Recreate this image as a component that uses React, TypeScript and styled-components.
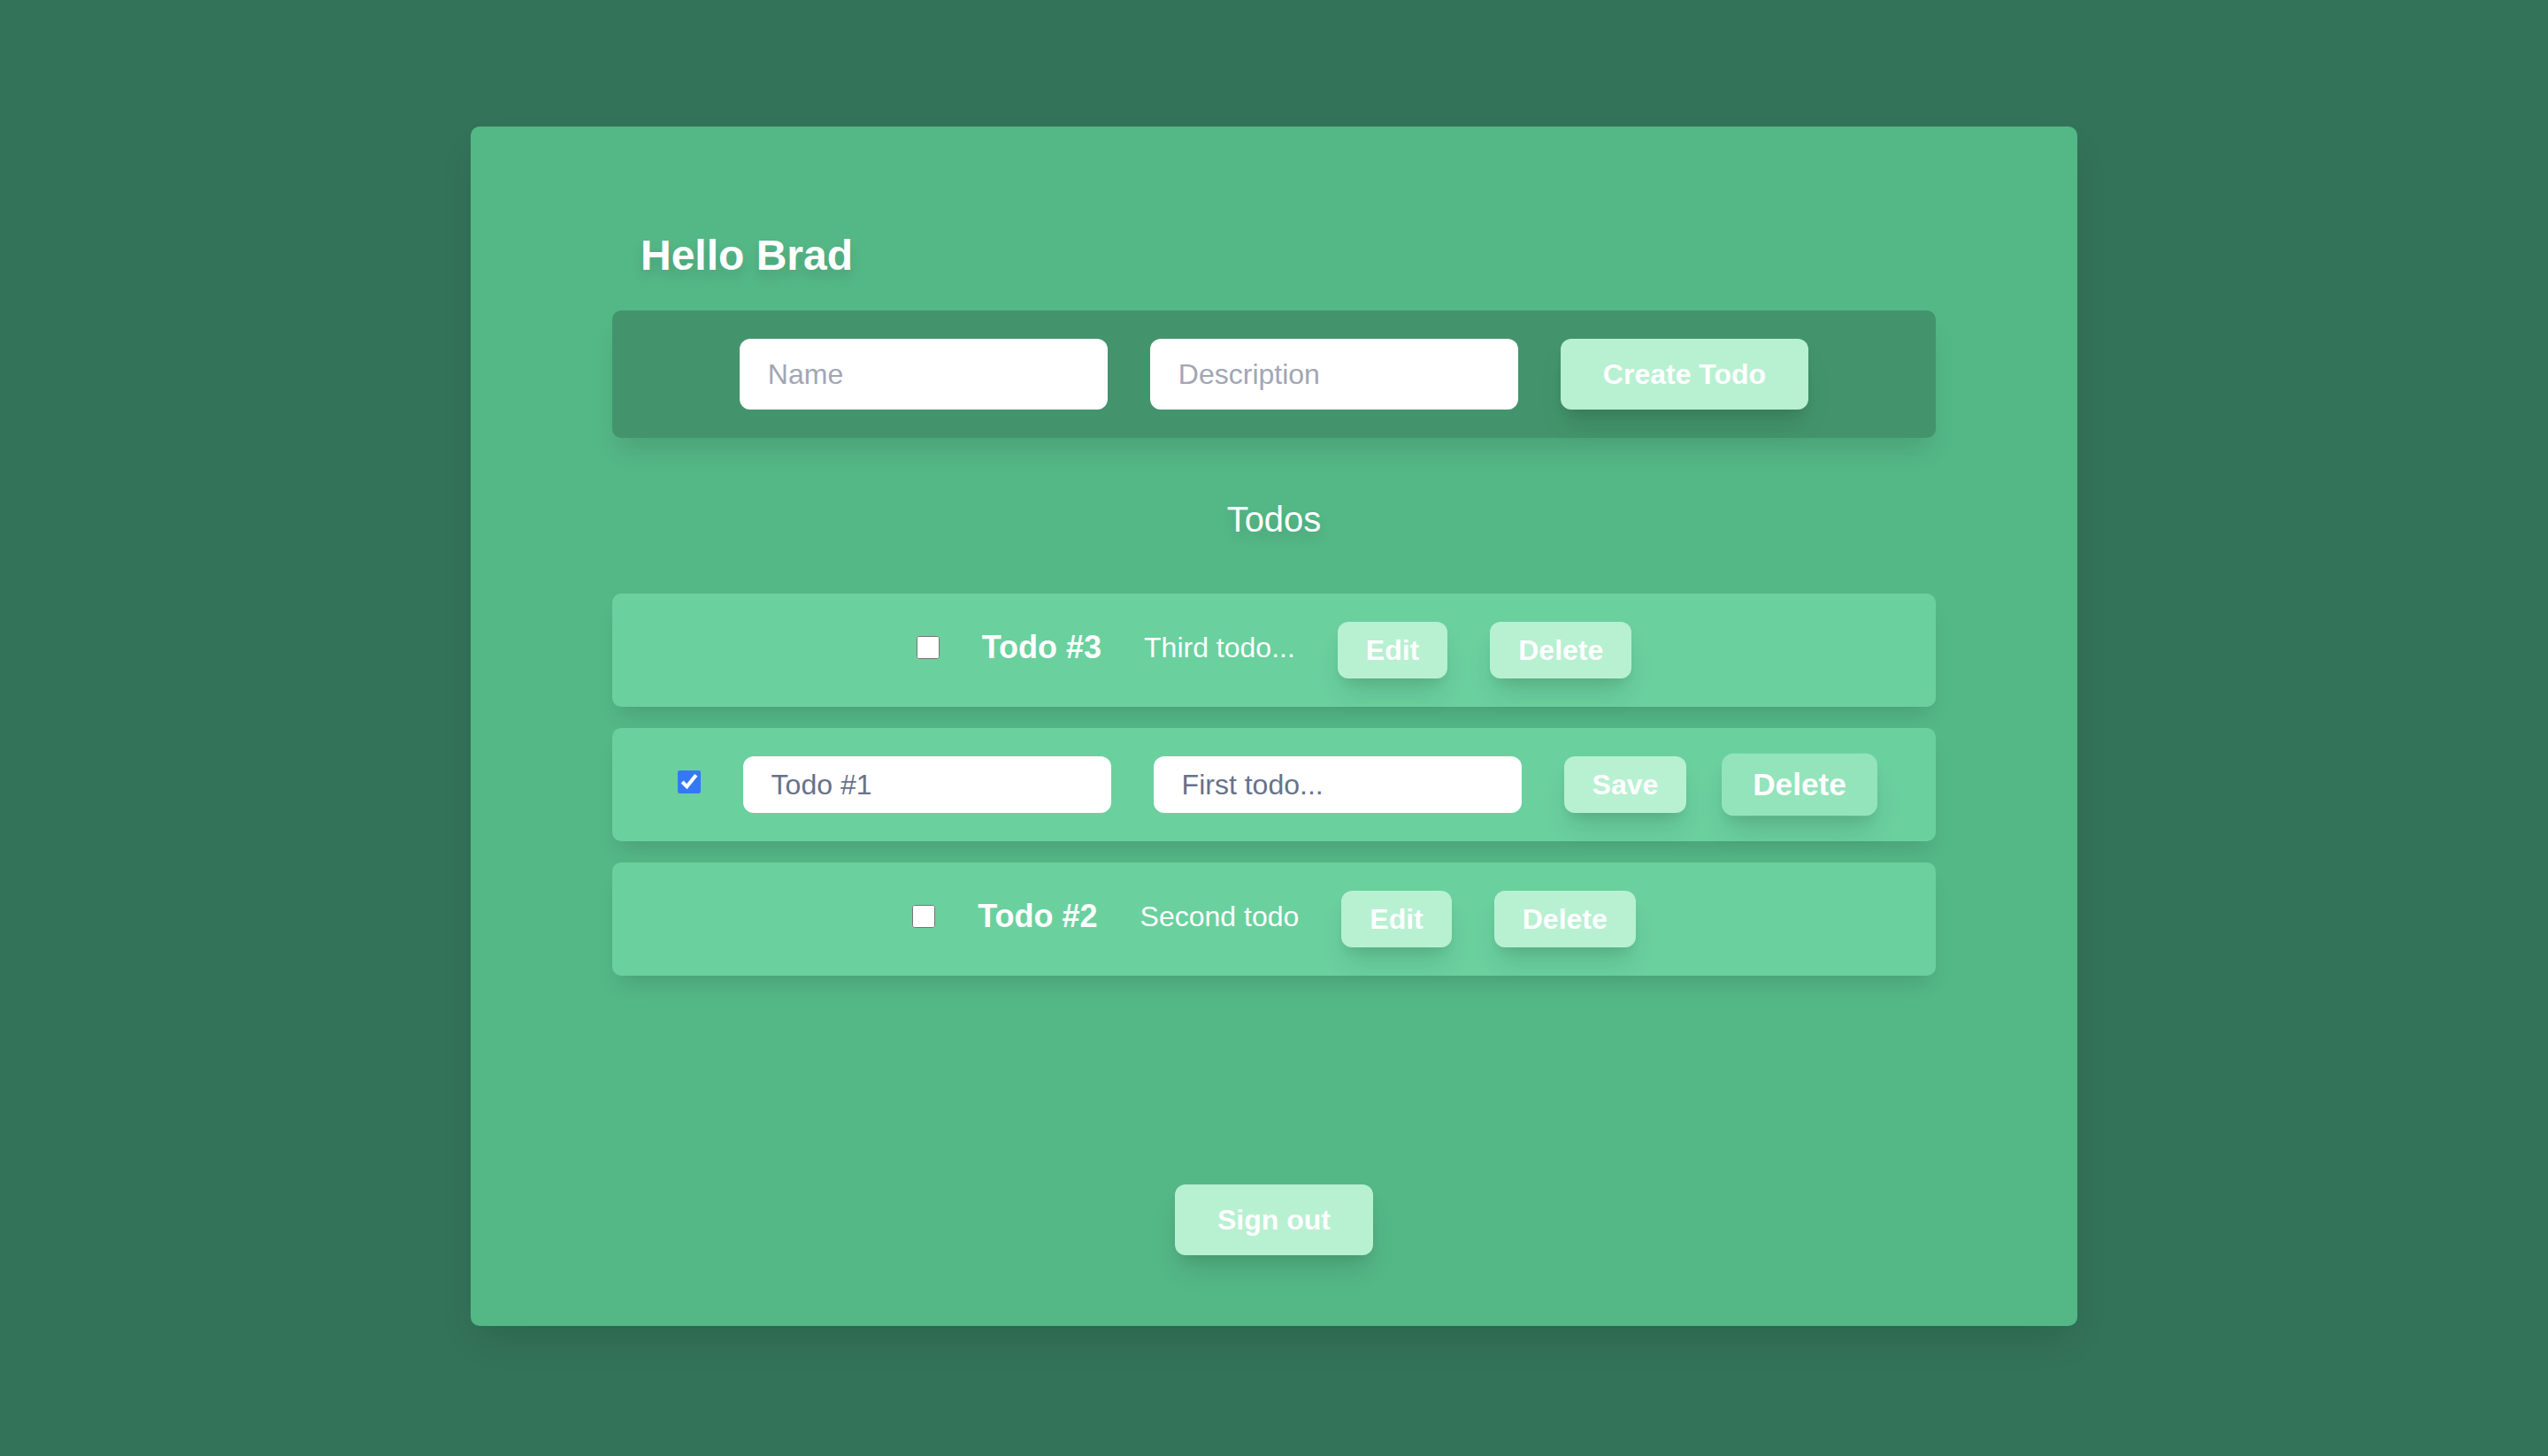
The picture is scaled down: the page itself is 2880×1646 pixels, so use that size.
import React from "react";
import styled, { createGlobalStyle, css } from "styled-components";

const GlobalStyle = createGlobalStyle`
  html, body {
    margin: 0;
    padding: 0;
    background: #337359;
    font-family: "Liberation Sans", Arial, Helvetica, sans-serif;
  }
  * { box-sizing: border-box; }
`;

const Page = styled.div`
  min-height: 1646px;
  display: flex;
  justify-content: center;
  align-items: flex-start;
  padding-top: 143px;
`;

const Card = styled.main`
  width: 1816px;
  height: 1356px;
  background: #54b786;
  border-radius: 10px;
  padding: 114px 160px 80px;
  display: flex;
  flex-direction: column;
  box-shadow: 0 20px 40px -10px rgba(0, 0, 0, 0.15);
`;

const Greeting = styled.h1`
  margin: 0 0 30px 32px;
  font-size: 48px;
  line-height: 64px;
  font-weight: 700;
  color: #ffffff;
  text-shadow: 0 8px 14px rgba(0, 0, 0, 0.12);
`;

const FormBar = styled.form`
  display: flex;
  justify-content: center;
  align-items: center;
  gap: 48px;
  padding: 32px;
  background: #43946c;
  border-radius: 10px;
  box-shadow: 0 20px 30px -8px rgba(0, 0, 0, 0.12);
`;

const TextInput = styled.input<{ $compact?: boolean }>`
  width: 416px;
  height: ${(p) => (p.$compact ? "64px" : "80px")};
  padding: 0 32px;
  border: none;
  outline: none;
  border-radius: 12px;
  background: #ffffff;
  font-family: inherit;
  font-size: 32px;
  color: #68728a;
  &::placeholder {
    color: #a2a6b4;
  }
`;

const buttonShadow = css`
  box-shadow: 0 20px 30px -6px rgba(0, 0, 0, 0.13),
    0 8px 12px -4px rgba(0, 0, 0, 0.06);
`;

const BigButton = styled.button`
  padding: 16px 48px;
  border: none;
  border-radius: 12px;
  background: #b8f0d2;
  color: #ffffff;
  font-family: inherit;
  font-size: 32px;
  line-height: 48px;
  font-weight: 700;
  cursor: pointer;
  ${buttonShadow}
`;

const SmallButton = styled.button<{ $hover?: boolean }>`
  padding: 8px 32px;
  border: none;
  border-radius: 12px;
  background: ${(p) => (p.$hover ? "#93e3bb" : "#b8f0d2")};
  transform: ${(p) => (p.$hover ? "scale(1.1)" : "none")};
  color: #ffffff;
  font-family: inherit;
  font-size: 32px;
  line-height: 48px;
  font-weight: 700;
  cursor: pointer;
  ${buttonShadow}
`;

const SectionTitle = styled.h2`
  margin: 64px 0 56px;
  text-align: center;
  font-size: 40px;
  line-height: 56px;
  font-weight: 400;
  color: #ffffff;
  text-shadow: 0 8px 14px rgba(0, 0, 0, 0.12);
`;

const TodoList = styled.ul`
  list-style: none;
  margin: 0;
  padding: 0;
  display: flex;
  flex-direction: column;
  gap: 24px;
`;

const TodoRow = styled.li`
  height: 128px;
  display: flex;
  align-items: center;
  justify-content: center;
  gap: 48px;
  background: #6ad09e;
  border-radius: 10px;
  box-shadow: 0 16px 24px -8px rgba(0, 0, 0, 0.12);
`;

const Check = styled.input`
  width: 26px;
  height: 26px;
  margin: 0 0 6px;
  accent-color: #3478f6;
`;

const TodoName = styled.span`
  margin-bottom: 6px;
  font-size: 36px;
  line-height: 48px;
  font-weight: 700;
  color: #ffffff;
`;

const TodoDesc = styled.span`
  margin-bottom: 6px;
  font-size: 32px;
  line-height: 48px;
  color: #ffffff;
`;

const Footer = styled.div`
  margin-top: auto;
  display: flex;
  justify-content: center;
`;

type Todo = { id: number; name: string; desc: string; done: boolean; editing?: boolean };

const todos: Todo[] = [
  { id: 3, name: "Todo #3", desc: "Third todo...", done: false },
  { id: 1, name: "Todo #1", desc: "First todo...", done: true, editing: true },
  { id: 2, name: "Todo #2", desc: "Second todo", done: false },
];

export default function App() {
  return (
    <>
      <GlobalStyle />
      <Page>
        <Card>
          <Greeting>Hello Brad</Greeting>
          <FormBar onSubmit={(e) => e.preventDefault()}>
            <TextInput placeholder="Name" />
            <TextInput placeholder="Description" />
            <BigButton type="submit">Create Todo</BigButton>
          </FormBar>
          <SectionTitle>Todos</SectionTitle>
          <TodoList>
            {todos.map((t) =>
              t.editing ? (
                <TodoRow key={t.id}>
                  <Check type="checkbox" defaultChecked={t.done} />
                  <TextInput $compact defaultValue={t.name} />
                  <TextInput $compact defaultValue={t.desc} />
                  <SmallButton>Save</SmallButton>
                  <SmallButton $hover>Delete</SmallButton>
                </TodoRow>
              ) : (
                <TodoRow key={t.id}>
                  <Check type="checkbox" defaultChecked={t.done} />
                  <TodoName>{t.name}</TodoName>
                  <TodoDesc>{t.desc}</TodoDesc>
                  <SmallButton>Edit</SmallButton>
                  <SmallButton>Delete</SmallButton>
                </TodoRow>
              )
            )}
          </TodoList>
          <Footer>
            <BigButton>Sign out</BigButton>
          </Footer>
        </Card>
      </Page>
    </>
  );
}
